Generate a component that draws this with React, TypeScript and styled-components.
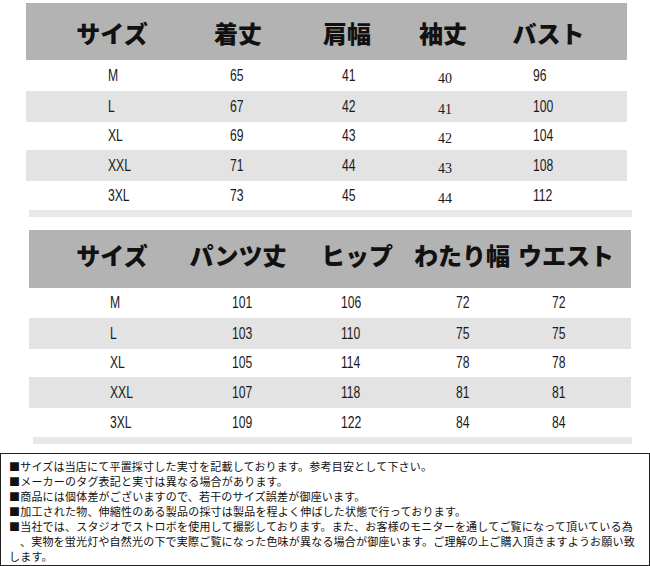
import React from 'react';
import styled, { createGlobalStyle } from 'styled-components';

const GlobalStyle = createGlobalStyle`
  html, body {
    margin: 0;
    padding: 0;
    background: #fff;
  }
  body {
    font-family: "Noto Sans CJK JP", "Liberation Sans", sans-serif;
  }
`;

const Page = styled.div`
  width: 650px;
  height: 566px;
  padding-top: 3px;
  box-sizing: border-box;
  background: #fff;
  overflow: hidden;
`;

const Sheet = styled.div<{ left: number; width: number; top?: number }>`
  margin-left: ${(p) => p.left}px;
  margin-top: ${(p) => p.top || 0}px;
  width: ${(p) => p.width}px;
`;

const Header = styled.div<{ cols: string; shift: number }>`
  display: grid;
  grid-template-columns: ${(p) => p.cols};
  height: ${(p) => (p.shift < 0 ? 58 : 57)}px;
  background: #b3b3b3;
  box-sizing: border-box;
  padding-top: ${(p) => (p.shift > 0 ? p.shift : 0)}px;
  padding-bottom: ${(p) => (p.shift < 0 ? -p.shift : 0)}px;
`;

const HeadCell = styled.div`
  display: flex;
  justify-content: center;
  align-items: center;
  min-width: 0;
  white-space: nowrap;
  font-family: "Noto Sans CJK JP", sans-serif;
  font-size: 24px;
  font-weight: 900;
  color: #111;
`;

const Row = styled.div<{ cols: string; h: number; stripe: boolean; pad: number }>`
  display: grid;
  grid-template-columns: ${(p) => p.cols};
  height: ${(p) => p.h}px;
  padding-left: ${(p) => p.pad}px;
  background: ${(p) => (p.stripe ? '#e3e3e3' : '#fff')};
  align-items: center;
`;

const Cell = styled.div<{ serif?: boolean }>`
  white-space: nowrap;
  color: #1a1a1a;
  ${(p) =>
    p.serif
      ? `
    font-family: "Liberation Serif", serif;
    font-size: 14px;
    padding-top: 6px;
  `
      : `
    font-family: "Liberation Sans", sans-serif;
    font-size: 16px;
  `}
`;

const Narrow = styled.span`
  display: inline-block;
  transform: scaleX(0.76);
  transform-origin: left center;
`;

const Strip = styled.div<{ left: number; width: number }>`
  margin-left: ${(p) => p.left}px;
  width: ${(p) => p.width}px;
  height: 7px;
  background: #e8e8e8;
`;

const Notes = styled.div`
  margin-top: 9px;
  width: 650px;
  height: 113px;
  box-sizing: border-box;
  border: 1px solid #222;
  padding: 5px 0 0 8px;
  font-family: "Noto Sans CJK JP", sans-serif;
  font-size: 11px;
  line-height: 15px;
  letter-spacing: 0.2px;
  color: #111;
`;

const NoteLine = styled.div<{ indent?: boolean }>`
  white-space: nowrap;
  padding-left: ${(p) => (p.indent ? 11 : 0)}px;
`;

type Table = {
  heads: string[];
  headCols: string;
  shift: number;
  dataCols: string;
  pad: number;
  heights: number[];
  serifCol?: number;
  rows: string[][];
};

const top: Table = {
  heads: ['サイズ', '着丈', '肩幅', '袖丈', 'バスト'],
  headCols: '172px 80px 138px 54px 1fr',
  shift: 2,
  dataCols: '122px 112px 96px 95px 1fr',
  pad: 82,
  heights: [31, 31, 28, 31, 29],
  serifCol: 3,
  rows: [
    ['M', '65', '41', '40', '96'],
    ['L', '67', '42', '41', '100'],
    ['XL', '69', '43', '42', '104'],
    ['XXL', '71', '44', '43', '108'],
    ['3XL', '73', '45', '44', '112'],
  ],
};

const bottom: Table = {
  heads: ['サイズ', 'パンツ丈', 'ヒップ', 'わたり幅', 'ウエスト'],
  headCols: '166px 86px 152px 58px 150px',
  shift: -10,
  dataCols: '122px 109px 115px 96px 1fr',
  pad: 81,
  heights: [30, 31, 28, 31, 29],
  rows: [
    ['M', '101', '106', '72', '72'],
    ['L', '103', '110', '75', '75'],
    ['XL', '105', '114', '78', '78'],
    ['XXL', '107', '118', '81', '81'],
    ['3XL', '109', '122', '84', '84'],
  ],
};

const SizeTable = ({ t }: { t: Table }) => (
  <>
    <Header cols={t.headCols} shift={t.shift}>
      {t.heads.map((h) => (
        <HeadCell key={h}>{h}</HeadCell>
      ))}
    </Header>
    {t.rows.map((r, i) => (
      <Row key={r[0]} cols={t.dataCols} h={t.heights[i]} stripe={i % 2 === 1} pad={t.pad}>
        {r.map((v, j) =>
          j === t.serifCol ? (
            <Cell key={j} serif>
              {v}
            </Cell>
          ) : (
            <Cell key={j}>
              <Narrow>{v}</Narrow>
            </Cell>
          )
        )}
      </Row>
    ))}
  </>
);

const notes = [
  '■サイズは当店にて平置採寸した実寸を記載しております。参考目安として下さい。',
  '■メーカーのタグ表記と実寸は異なる場合があります。',
  '■商品には個体差がございますので、若干のサイズ誤差が御座います。',
  '■加工された物、伸縮性のある製品の採寸は製品を程よく伸ばした状態で行っております。',
  '■当社では、スタジオでストロボを使用して撮影しております。また、お客様のモニターを通してご覧になって頂いている為',
];

const App = () => {
  return (
    <Page>
      <GlobalStyle />
      <Sheet left={26} width={601}>
        <SizeTable t={top} />
      </Sheet>
      <Strip left={29} width={603} />
      <Sheet left={29} width={602} top={13}>
        <SizeTable t={bottom} />
      </Sheet>
      <Strip left={33} width={599} />
      <Notes>
        {notes.map((n) => (
          <NoteLine key={n}>{n}</NoteLine>
        ))}
        <NoteLine indent>、実物を蛍光灯や自然光の下で実際ご覧になった色味が異なる場合が御座います。ご理解の上ご購入頂きますようお願い致</NoteLine>
        <NoteLine>します。</NoteLine>
      </Notes>
    </Page>
  );
};

export default App;
